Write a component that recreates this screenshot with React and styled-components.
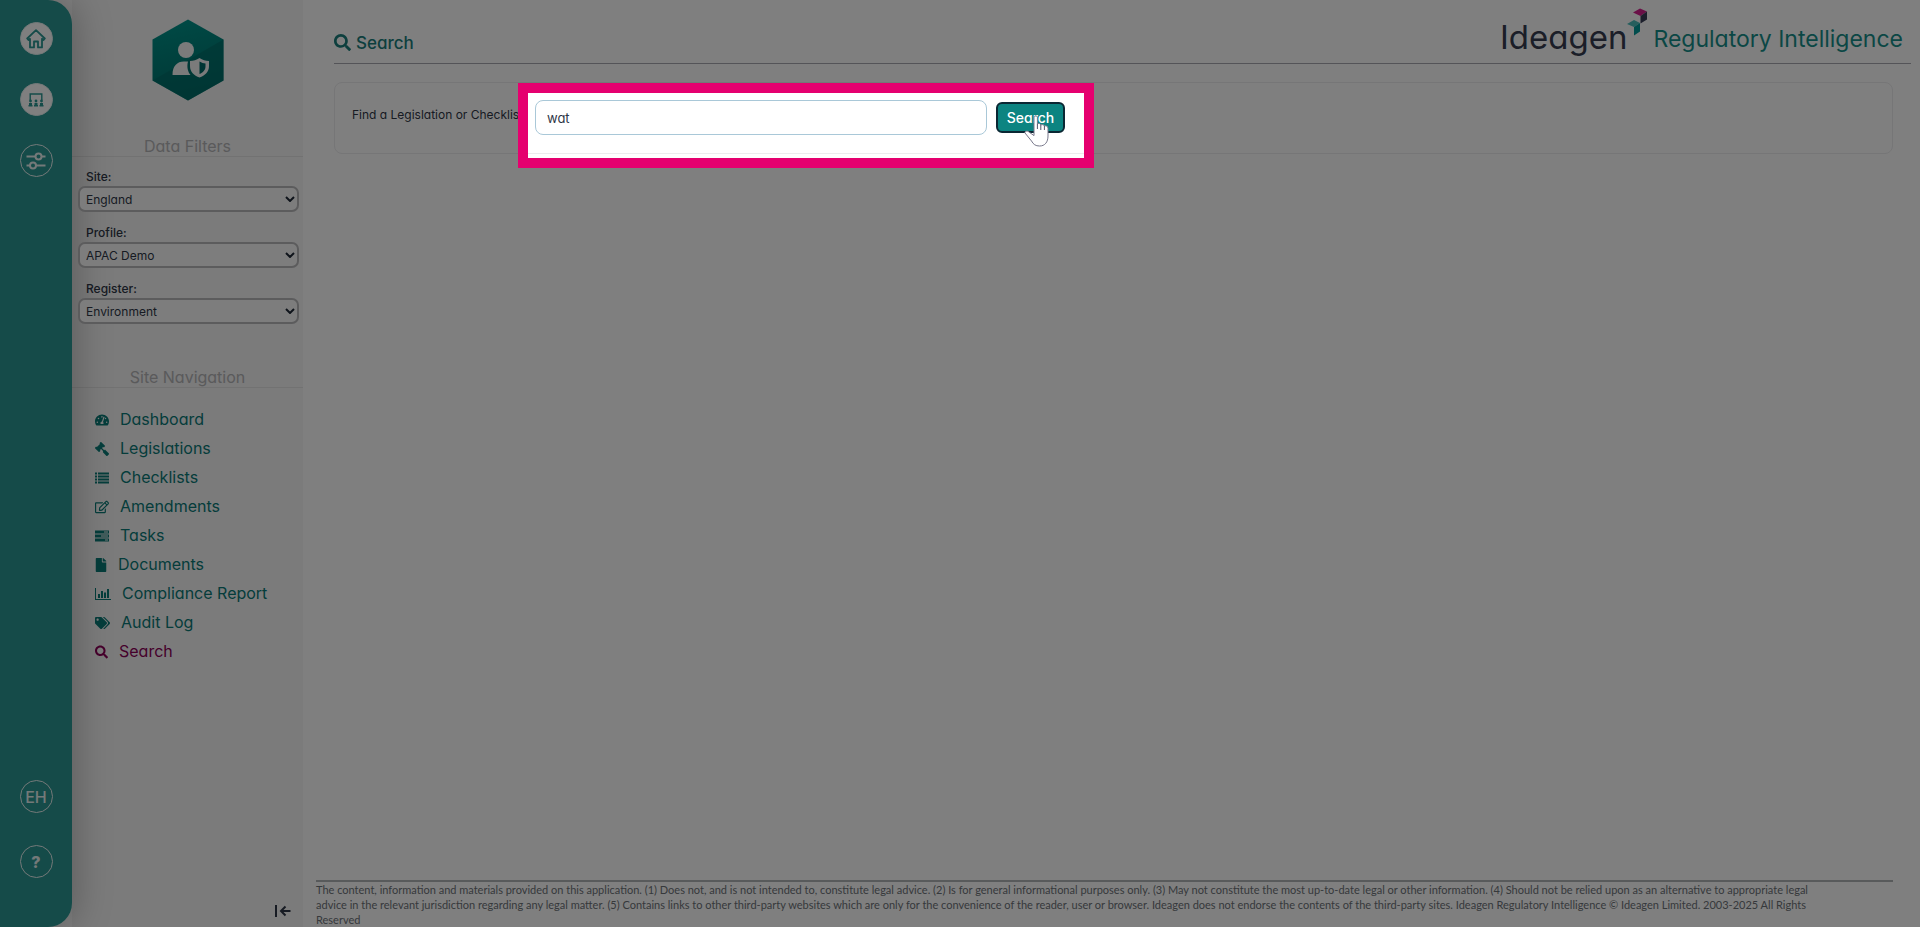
import React from "react";
import styled, { createGlobalStyle } from "styled-components";
import { FaTachometerAlt, FaGavel, FaRegEdit, FaFile, FaTags, FaSearch } from "react-icons/fa";

const GavelIcon = styled(FaGavel)`
  transform: scaleX(-1);
`;

const ListIcon = () => (
  <svg viewBox="0 0 14 12" fill="currentColor">
    <path d="M0 0.5h2v2h-2z M3 0.5h11v2h-11z M0 3.5h2v2h-2z M3 3.5h11v2h-11z M0 6.5h2v2h-2z M3 6.5h11v2h-11z M0 9.5h2v2h-2z M3 9.5h11v2h-11z" />
  </svg>
);

const TasksIcon = () => (
  <svg viewBox="0 0 14 12" fill="currentColor" fillRule="evenodd">
    <path d="M0 0.5h14v3h-14z M9 1.5v1h4v-1z M0 4.5h14v3h-14z M6 5.5v1h7v-1z M0 8.5h14v3h-14z M10 9.5v1h3v-1z" />
  </svg>
);

const ChartIcon = () => (
  <svg viewBox="0 0 16 12" fill="currentColor">
    <path d="M0 0h1v11h15v1h-16z M3 6h2v4h-2z M6 3h2v7h-2z M9 4.5h2v5.5h-2z M12 1h2v9h-2z" />
  </svg>
);

const navItems = [
  { label: "Dashboard", icon: FaTachometerAlt, size: 14 },
  { label: "Legislations", icon: GavelIcon, size: 14 },
  { label: "Checklists", icon: ListIcon, size: 14 },
  { label: "Amendments", icon: FaRegEdit, size: 14 },
  { label: "Tasks", icon: TasksIcon, size: 14 },
  { label: "Documents", icon: FaFile, size: 12 },
  { label: "Compliance Report", icon: ChartIcon, size: 16 },
  { label: "Audit Log", icon: FaTags, size: 15 },
  { label: "Search", icon: FaSearch, size: 13, active: true },
];

const filters = [
  { id: "site", label: "Site:", value: "England" },
  { id: "profile", label: "Profile:", value: "APAC Demo" },
  { id: "register", label: "Register:", value: "Environment" },
];

const HomeIcon = () => (
  <svg width="20" height="20" viewBox="0 0 20 20" fill="none" stroke="currentColor" strokeWidth="1.8" strokeLinejoin="round">
    <path d="M10 1.2 L18.8 9.5 L17.6 11 L16 9.8 V18.4 H12 V12.5 H8 V18.4 H4 V9.8 L2.4 11 L1.2 9.5 Z" />
  </svg>
);

const SitesIcon = () => (
  <svg width="16" height="14" viewBox="0 0 16 14" fill="none" stroke="currentColor" strokeWidth="1.4">
    <path d="M2.2 7 V1 H13.8 V7" />
    <path d="M0.5 12.8 H4.5 M6 12.8 H10 M11.5 12.8 H15.5" strokeWidth="1.6" />
    <path d="M2.5 10 V12 M8 10 V12 M13.5 10 V12" strokeWidth="3" />
    <g fill="currentColor" stroke="none">
      <circle cx="2.5" cy="8" r="1.4" />
      <circle cx="8" cy="8" r="1.4" />
      <circle cx="13.5" cy="8" r="1.4" />
    </g>
  </svg>
);

const SlidersIcon = () => (
  <svg width="20" height="18" viewBox="0 0 20 18" fill="none" stroke="currentColor" strokeWidth="2">
    <path d="M0.5 4.5 H9.5 M15.5 4.5 H19.5 M0.5 13.5 H4 M10 13.5 H19.5" />
    <circle cx="12.5" cy="4.5" r="3" />
    <circle cx="7" cy="13.5" r="3" />
  </svg>
);

const Emblem = () => (
  <svg width="72" height="82" viewBox="0 0 72 82">
    <defs>
      <linearGradient id="hex" x1="0.2" y1="0" x2="0.4" y2="1">
        <stop offset="0" stopColor="#00958c" />
        <stop offset="1" stopColor="#006e69" />
      </linearGradient>
    </defs>
    <path d="M36 0.5 L71.5 20.5 V61.5 L36 81.5 L0.5 61.5 V20.5 Z" fill="url(#hex)" />
    <path d="M71.5 20.5 V61.5 L36 81.5 L0.5 61.5 Z" fill="#006b67" opacity="0.6" />
    <circle cx="34" cy="31" r="8" fill="#f6f6f6" />
    <path d="M20.5 56 C20.5 47 25 42.5 32 42.5 H36 C34.5 48 36 53 38.5 56 Z" fill="#f6f6f6" />
    <path
      d="M47.5 39 C50.5 41 53.5 41.8 57 42 V47 C57 53 53 56.5 47.5 58.5 C42 56.5 38 53 38 47 V42 C41.5 41.8 44.5 41 47.5 39 Z"
      fill="#f6f6f6"
    />
    <path d="M47.5 42.5 C49.5 43.8 51.5 44.3 53.5 44.5 V47.5 C53.5 51 51 53.5 47.5 55 Z" fill="#006b67" />
  </svg>
);

const CollapseIcon = () => (
  <svg width="16" height="12" viewBox="0 0 16 12" fill="none" stroke="currentColor" strokeWidth="2">
    <path d="M1 0 V12 M15.5 6 H6 M10.5 1.5 L6 6 L10.5 10.5" />
  </svg>
);

const LogoMark = () => (
  <svg width="20" height="28" viewBox="0 0 20 28">
    <path d="M6 4.5 L13 0.5 L20 3.5 L13.5 8 Z" fill="#d4208e" />
    <path d="M20 3.5 V11.5 L13.5 15.5 V8 Z" fill="#3a3f58" />
    <path d="M0 16 L7 12 L13 15 L7 19 Z" fill="#4cbdbb" />
    <path d="M13 15 V23.5 L7 27.5 V19 Z" fill="#009a9a" />
  </svg>
);

const HandCursor = () => (
  <svg width="26" height="32" viewBox="0 0 26 32">
    <path
      d="M10 2 C10 0.6 13.4 0.6 13.4 2.4 V9 C14.5 8 16.4 8.4 16.8 10 C18 9.2 20 9.6 20.4 11 C22 10.4 24 11 24 13.4 V21 C24 27 21 31 15.6 31 C11.5 31 9.5 29.5 7.5 26 L1 18 C0.4 16.6 2.6 15.4 4.4 16.6 L10 20.6 Z"
      fill="#fff"
      stroke="#77778a"
    />
    <path d="M13.4 9 V14 M16.8 10 V15 M20.4 11 V15" stroke="#55556a" fill="none" />
  </svg>
);

const App = () => {
  return (
    <>
      <GlobalStyle />
      <Page>
        <Rail aria-label="Main">
          <RailGroup $gap={28}>
            <RailButton type="button" aria-label="Home" $filled>
              <HomeIcon />
            </RailButton>
            <RailButton type="button" aria-label="Sites" $filled>
              <SitesIcon />
            </RailButton>
            <RailButton type="button" aria-label="Settings">
              <SlidersIcon />
            </RailButton>
          </RailGroup>
          <RailGroup $gap={32}>
            <RailButton type="button">EH</RailButton>
            <RailButton type="button" $bold>
              ?
            </RailButton>
          </RailGroup>
        </Rail>
        <Sidebar>
          <EmblemBox>
            <Emblem />
          </EmblemBox>
          <SectionTitle>Data Filters</SectionTitle>
          <FilterList>
            {filters.map(({ id, label, value }) => (
              <Filter key={id}>
                <label htmlFor={id}>{label}</label>
                <SelectBox>
                  <select id={id} defaultValue={value}>
                    <option>{value}</option>
                  </select>
                  <svg width="10" height="6" viewBox="0 0 10 6" fill="none" stroke="#1f2937" strokeWidth="2">
                    <path d="M1 1 L5 5 L9 1" />
                  </svg>
                </SelectBox>
              </Filter>
            ))}
          </FilterList>
          <SectionTitle>Site Navigation</SectionTitle>
          <Nav>
            {navItems.map(({ label, icon: Icon, size, active }) => (
              <NavLink key={label} href="#" $size={size} $active={active}>
                <Icon />
                {label}
              </NavLink>
            ))}
          </Nav>
          <CollapseButton type="button" aria-label="Collapse">
            <CollapseIcon />
          </CollapseButton>
        </Sidebar>
        <Main>
          <Header>
            <h1>
              <FaSearch />
              Search
            </h1>
            <Brand>
              <BrandName>Ideagen</BrandName>
              <LogoMark />
              <BrandProduct>Regulatory Intelligence</BrandProduct>
            </Brand>
          </Header>
          <SearchPanel>
            <label htmlFor="query">Find a Legislation or Checklist:</label>
            <Spotlight>
              <input id="query" type="text" defaultValue="wat" />
              <SearchButton type="button">Search</SearchButton>
              <Pointer>
                <HandCursor />
              </Pointer>
            </Spotlight>
          </SearchPanel>
          <Footer>
            The content, information and materials provided on this application. (1) Does not, and is not intended to,
            constitute legal advice. (2) Is for general informational purposes only. (3) May not constitute the most
            up-to-date legal or other information. (4) Should not be relied upon as an alternative to appropriate legal
            advice in the relevant jurisdiction regarding any legal matter. (5) Contains links to other third-party
            websites which are only for the convenience of the reader, user or browser. Ideagen does not endorse the
            contents of the third-party sites. Ideagen Regulatory Intelligence © Ideagen Limited. 2003-2025 All Rights
            Reserved
          </Footer>
        </Main>
      </Page>
    </>
  );
};

const GlobalStyle = createGlobalStyle`
  * {
    box-sizing: border-box;
  }
  body {
    margin: 0;
    background: #fff;
    color: #2f3747;
    font-family: Inter, "Liberation Sans", sans-serif;
    font-feature-settings: "cv11";
  }
  button, input, select {
    font-family: inherit;
    font-feature-settings: inherit;
    color: inherit;
  }
`;

const Page = styled.div`
  display: flex;
  min-height: 100vh;
  overflow: hidden;
`;

const Rail = styled.nav`
  width: 72px;
  flex-shrink: 0;
  display: flex;
  flex-direction: column;
  align-items: center;
  justify-content: space-between;
  padding: 22px 0 49px;
  background: #2a9792;
  border-radius: 0 24px 24px 0;
  box-shadow: 4px 0 36px rgba(0, 0, 0, 0.25);
  position: relative;
`;

const RailGroup = styled.div`
  display: flex;
  flex-direction: column;
  gap: ${({ $gap }) => $gap}px;
`;

const RailButton = styled.button`
  width: 33px;
  height: 33px;
  display: flex;
  align-items: center;
  justify-content: center;
  padding: 0;
  border: 1px solid #e8f2f2;
  border-radius: 50%;
  background: ${({ $filled }) => ($filled ? "#fff" : "transparent")};
  color: ${({ $filled }) => ($filled ? "#2a9792" : "#e8f2f2")};
  font-size: 16px;
  font-weight: ${({ $bold }) => ($bold ? 800 : 500)};
`;

const Sidebar = styled.aside`
  width: 231px;
  flex-shrink: 0;
  display: flex;
  flex-direction: column;
  background: #f6f6f6;
`;

const EmblemBox = styled.div`
  display: flex;
  justify-content: center;
  padding: 19px 0 35px;
`;

const SectionTitle = styled.h2`
  margin: 0;
  border-bottom: 1px solid #e4e4e4;
  color: #b4b4b6;
  font-size: 16px;
  line-height: 20px;
  font-weight: 400;
  text-align: center;
`;

const FilterList = styled.div`
  display: flex;
  flex-direction: column;
  gap: 12px;
  padding: 11px 4px 43px 6px;
`;

const Filter = styled.div`
  label {
    display: block;
    padding-left: 8px;
    font-size: 12px;
    font-weight: 500;
    line-height: 18px;
  }
`;

const SelectBox = styled.div`
  position: relative;
  select {
    display: block;
    width: 100%;
    height: 26px;
    padding: 0 6px;
    border: 2px solid #b8b8ba;
    border-radius: 7px;
    background: #fbfbfb;
    font-size: 12px;
    appearance: none;
  }
  svg {
    position: absolute;
    right: 4px;
    top: 10px;
  }
`;

const Nav = styled.nav`
  display: flex;
  flex-direction: column;
  padding: 17px 0 0 23px;
`;

const NavLink = styled.a`
  display: flex;
  align-items: center;
  gap: 11px;
  color: ${({ $active }) => ($active ? "#8c0058" : "#0a7a76")};
  font-size: 16px;
  line-height: 29px;
  text-decoration: none;
  svg {
    width: ${({ $size }) => $size}px;
    height: 14px;
  }
`;

const CollapseButton = styled.button`
  display: flex;
  align-self: flex-end;
  margin-top: auto;
  padding: 0 12px 10px;
  border: 0;
  background: none;
`;

const Main = styled.main`
  flex: 1;
  min-width: 0;
  display: flex;
  flex-direction: column;
`;

const Header = styled.header`
  display: flex;
  justify-content: space-between;
  height: 64px;
  margin: 0 9px 18px 31px;
  border-bottom: 1px solid #a9a9b0;
  h1 {
    display: flex;
    align-items: center;
    gap: 5px;
    margin: 0;
    padding-top: 22px;
    color: #1b7f7c;
    font-size: 17px;
    font-weight: 500;
  }
`;

const Brand = styled.div`
  display: flex;
  align-items: flex-start;
  padding: 8px 8px 0 0;
`;

const BrandName = styled.span`
  color: #363d50;
  font-size: 33px;
  line-height: 58px;
`;

const BrandProduct = styled.span`
  margin-left: 6px;
  color: #178f8a;
  font-size: 23px;
  line-height: 62px;
`;

const SearchPanel = styled.section`
  display: flex;
  align-items: flex-start;
  height: 72px;
  margin: 0 27px 0 31px;
  padding-left: 17px;
  border: 1px solid #ececee;
  border-radius: 8px;
  label {
    width: 166px;
    padding-top: 23px;
    font-size: 12px;
    line-height: 18px;
    white-space: nowrap;
  }
`;

/* the huge shadow dims everything outside the pink frame */
const Spotlight = styled.div`
  position: relative;
  z-index: 2;
  display: flex;
  gap: 9px;
  padding: 7px 19px 23px 7px;
  border: 10px solid #e5006f;
  box-shadow: 0 0 0 4000px rgba(0, 0, 0, 0.5);
  input {
    width: 452px;
    height: 35px;
    padding: 0 11px;
    border: 1px solid #a9c8d8;
    border-radius: 8px;
    background: #fff;
    font-size: 13px;
  }
`;

const SearchButton = styled.button`
  align-self: center;
  width: 69px;
  height: 31px;
  padding: 0;
  border: 2px solid #0b2733;
  border-radius: 6px;
  background: #0c8481;
  color: #fff;
  font-size: 14px;
  font-weight: 500;
`;

const Pointer = styled.div`
  position: absolute;
  right: 34px;
  top: 22px;
`;

const Footer = styled.footer`
  margin: auto 27px 0 13px;
  padding-right: 60px;
  border-top: 2px solid #b0b4b6;
  color: #6d7278;
  font-family: Lato, sans-serif;
  font-size: 11px;
  line-height: 15px;
`;

export default App;
